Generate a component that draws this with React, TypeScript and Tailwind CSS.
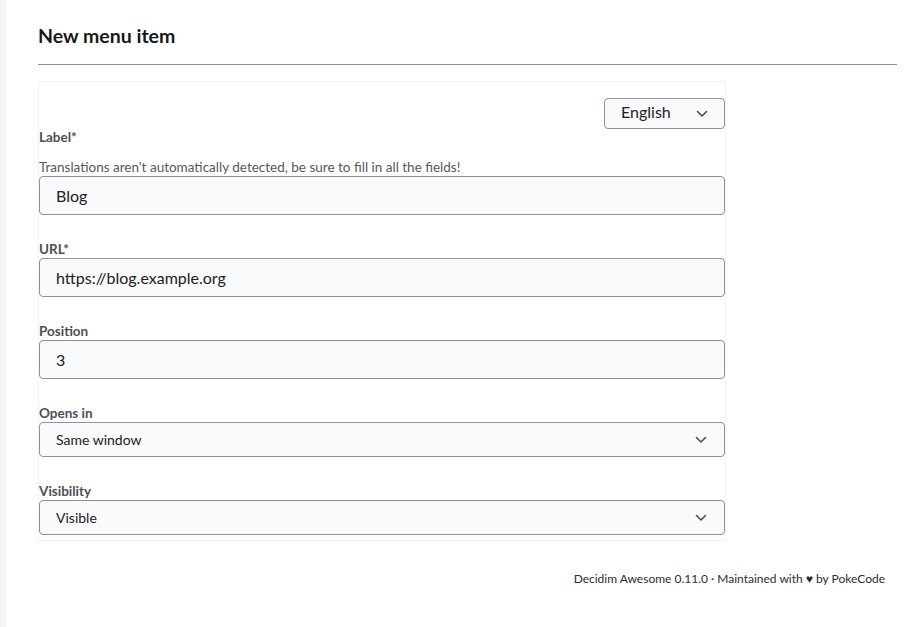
import React from "react";

const font = { fontFamily: "Lato, 'Liberation Sans', sans-serif" };

function Chevron() {
  return (
    <svg width="12" height="8" viewBox="0 0 12 8" fill="none" className="shrink-0">
      <path d="M1.5 1.5 L6 6 L10.5 1.5" stroke="#4a4f57" strokeWidth="1.6" strokeLinecap="round" strokeLinejoin="round" />
    </svg>
  );
}

function Label({ children, className = "" }: { children: React.ReactNode; className?: string }) {
  return <div className={`text-[13.5px] font-bold leading-[18px] text-[#4b4f56] ${className}`}>{children}</div>;
}

function TextInput({ value }: { value: string }) {
  return (
    <div className="flex h-[39px] items-center rounded-[4px] border border-[#8f9299] bg-[#f9fafb] pl-[16px] text-[16px] text-[#1f2024]">
      {value}
    </div>
  );
}

function SelectBox({ value }: { value: string }) {
  return (
    <div className="flex h-[35px] items-center justify-between rounded-[4px] border border-[#8f9299] bg-[#f9fafb] pl-[16px] pr-[17px] text-[14px] text-[#1f2024]">
      <span>{value}</span>
      <Chevron />
    </div>
  );
}

export default function App() {
  return (
    <div className="flex min-h-[627px] bg-white" style={font}>
      <div className="w-[6px] shrink-0 bg-[#f4f5f7]" />
      <div className="flex-1 pl-[32px] pr-[20px]">
        <h1 className="pt-[24px] text-[19.5px] font-bold leading-[24px] text-[#16181c]">New menu item</h1>
        <div className="mt-[16px] h-px bg-[#8c8c8c]" />
        <div className="mt-[16px] w-[688px] border border-[#f1f2f4] pb-[5px]">
          <div className="flex justify-end pt-[16px]">
            <div className="flex h-[31px] w-[121px] items-center justify-between rounded-[4px] border border-[#8f9299] bg-[#f9fafb] pb-[3px] pl-[16px] pr-[16px] text-[16px] text-[#1f2024]">
              <span>English</span>
              <span className="pt-[4px]">
                <Chevron />
              </span>
            </div>
          </div>
          <Label className="-mt-[1px]">Label*</Label>
          <div className="mt-[12px] text-[13.5px] leading-[18px] text-[#55585e]">
            Translations aren't automatically detected, be sure to fill in all the fields!
          </div>
          <TextInput value="Blog" />
          <Label className="mt-[25px]">URL*</Label>
          <TextInput value="https://blog.example.org" />
          <Label className="mt-[25px]">Position</Label>
          <TextInput value="3" />
          <Label className="mt-[25px]">Opens in</Label>
          <SelectBox value="Same window" />
          <Label className="mt-[25px]">Visibility</Label>
          <SelectBox value="Visible" />
        </div>
        <div className="mt-[29px] flex justify-end pr-[12px] text-[12px] leading-[18px] text-[#2a2c30]">
          Decidim Awesome 0.11.0 · Maintained with ♥ by PokeCode
        </div>
      </div>
    </div>
  );
}
